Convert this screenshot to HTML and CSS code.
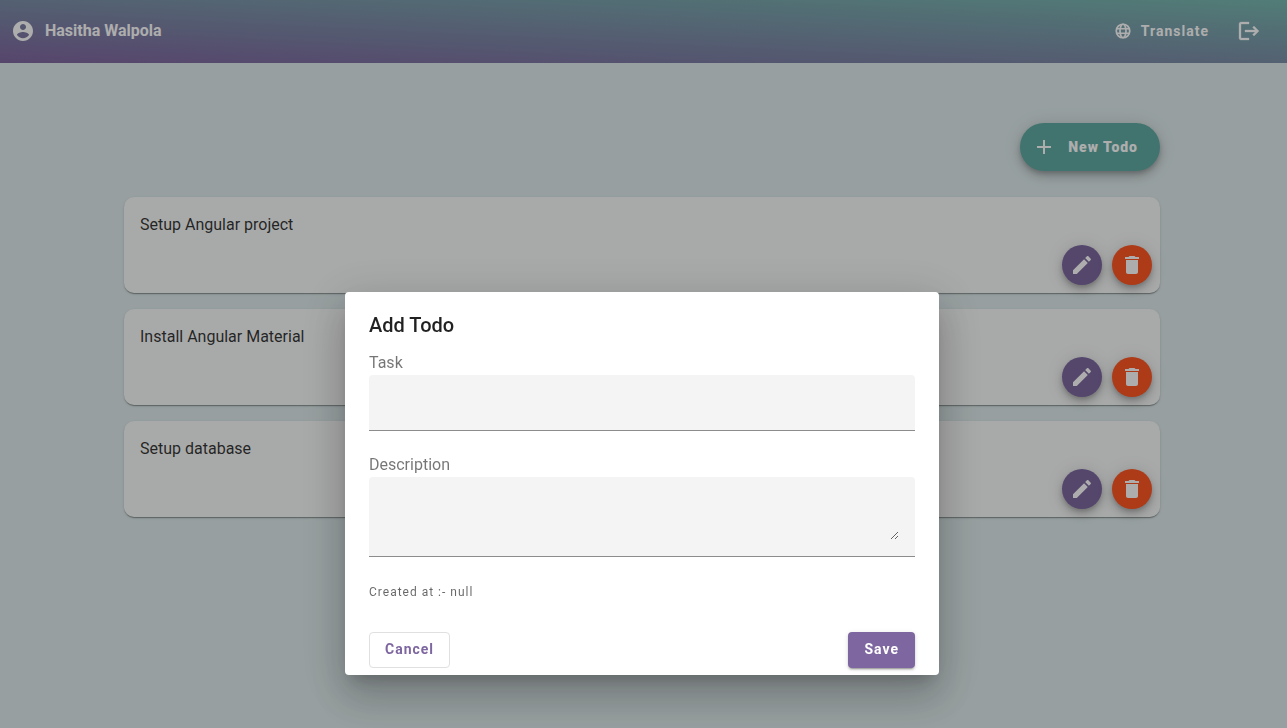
FILE: index.html
```html
<!DOCTYPE html>
<html lang="en">
<head>
<meta charset="utf-8">
<meta name="viewport" content="width=device-width, initial-scale=1">
<title>Todos</title>
<link rel="stylesheet" href="styles.css">
</head>
<body>
<header class="toolbar">
  <div class="user">
    <svg class="icon" viewBox="0 0 24 24" aria-hidden="true"><path d="M12 2C6.48 2 2 6.48 2 12s4.48 10 10 10 10-4.480 10-10S17.520 2 12 2zm0 3c1.660 0 3 1.340 3 3s-1.340 3-3 3-3-1.340-3-3 1.340-3 3-3zm0 14.200c-2.500 0-4.710-1.280-6-3.220.030-1.990 4-3.080 6-3.080 1.990 0 5.970 1.090 6 3.080-1.290 1.940-3.500 3.220-6 3.220z"/></svg>
    <span class="user-name">Hasitha Walpola</span>
  </div>
  <div class="toolbar-actions">
    <button class="translate" type="button">
      <svg class="icon-small" viewBox="0 0 24 24" aria-hidden="true"><g fill="none" stroke="currentColor" stroke-width="2.300"><circle cx="12" cy="12" r="9"/><ellipse cx="12" cy="12" rx="4" ry="9"/><path d="M3.500 9h17M3.500 15h17"/></g></svg>
      Translate
    </button>
    <button class="icon-button" type="button" aria-label="Log out">
      <svg class="icon" viewBox="0 0 24 24" aria-hidden="true"><path d="M17 7l-1.410 1.410L18.170 11H8v2h10.170l-2.580 2.580L17 17l5-5zM4 5h8V3H4c-1.100 0-2 .9-2 2v14c0 1.100.9 2 2 2h8v-2H4V5z" stroke="currentColor" stroke-width=".3"/></svg>
    </button>
  </div>
</header>
<main class="content">
  <button class="new-todo" type="button">
    <svg class="icon" viewBox="0 0 24 24" aria-hidden="true"><path d="M19 13h-6v6h-2v-6H5v-2h6V5h2v6h6v2z"/></svg>
    New Todo
  </button>
  <ul class="todos">
    <li class="card">
      <span class="card-title">Setup Angular project</span>
      <div class="card-actions">
        <button class="fab edit" type="button" aria-label="Edit"><svg class="icon" viewBox="0 0 24 24" aria-hidden="true"><path d="M3 17.250V21h3.750L17.810 9.940l-3.750-3.750L3 17.250zM20.710 7.040c.39-.39.39-1.020 0-1.410l-2.340-2.340c-.39-.39-1.020-.39-1.410 0l-1.830 1.830 3.750 3.750 1.830-1.830z"/></svg></button>
        <button class="fab delete" type="button" aria-label="Delete"><svg class="icon" viewBox="0 0 24 24" aria-hidden="true"><path d="M6 19c0 1.100.9 2 2 2h8c1.100 0 2-.9 2-2V7H6v12zM19 4h-3.500l-1-1h-5l-1 1H5v2h14V4z"/></svg></button>
      </div>
    </li>
    <li class="card">
      <span class="card-title">Install Angular Material</span>
      <div class="card-actions">
        <button class="fab edit" type="button" aria-label="Edit"><svg class="icon" viewBox="0 0 24 24" aria-hidden="true"><path d="M3 17.250V21h3.750L17.810 9.940l-3.750-3.750L3 17.250zM20.710 7.040c.39-.39.39-1.020 0-1.410l-2.340-2.340c-.39-.39-1.020-.39-1.410 0l-1.830 1.830 3.750 3.750 1.830-1.830z"/></svg></button>
        <button class="fab delete" type="button" aria-label="Delete"><svg class="icon" viewBox="0 0 24 24" aria-hidden="true"><path d="M6 19c0 1.100.9 2 2 2h8c1.100 0 2-.9 2-2V7H6v12zM19 4h-3.500l-1-1h-5l-1 1H5v2h14V4z"/></svg></button>
      </div>
    </li>
    <li class="card">
      <span class="card-title">Setup database</span>
      <div class="card-actions">
        <button class="fab edit" type="button" aria-label="Edit"><svg class="icon" viewBox="0 0 24 24" aria-hidden="true"><path d="M3 17.250V21h3.750L17.810 9.940l-3.750-3.750L3 17.250zM20.710 7.040c.39-.39.39-1.020 0-1.410l-2.340-2.340c-.39-.39-1.020-.39-1.410 0l-1.830 1.830 3.750 3.750 1.830-1.830z"/></svg></button>
        <button class="fab delete" type="button" aria-label="Delete"><svg class="icon" viewBox="0 0 24 24" aria-hidden="true"><path d="M6 19c0 1.100.9 2 2 2h8c1.100 0 2-.9 2-2V7H6v12zM19 4h-3.500l-1-1h-5l-1 1H5v2h14V4z"/></svg></button>
      </div>
    </li>
  </ul>
</main>
<div class="overlay">
  <form class="dialog" role="dialog" aria-modal="true" aria-labelledby="dialog-title">
    <h1 class="dialog-title" id="dialog-title">Add Todo</h1>
    <label class="label" for="task">Task</label>
    <div class="field"><input class="control" id="task" type="text"></div>
    <label class="label" for="description">Description</label>
    <div class="field"><textarea class="control area" id="description"></textarea></div>
    <p class="created">Created at :- null</p>
    <div class="dialog-actions">
      <button class="button cancel" type="button">Cancel</button>
      <button class="button save" type="submit">Save</button>
    </div>
  </form>
</div>
</body>
</html>
```
FILE: styles.css
```css
:root {
  --purple: #7e67a0;
  --teal: #60aba4;
  --orange: #ff5724;
  --text: rgba(0, 0, 0, 0.87);
}

* {
  box-sizing: border-box;
}

body {
  margin: 0;
  min-height: 100vh;
  background: #dfebec;
  color: var(--text);
  font-family: Roboto, "Liberation Sans", sans-serif;
  font-size: 16px;
  line-height: 24px;
}

button {
  border: 0;
  padding: 0;
  background: none;
  color: inherit;
  font: inherit;
  cursor: pointer;
}

.icon {
  display: block;
  width: 24px;
  height: 24px;
  fill: currentColor;
}

.icon-small {
  display: block;
  width: 18px;
  height: 18px;
}

.toolbar {
  display: flex;
  align-items: center;
  justify-content: space-between;
  height: 63px;
  padding: 0 26px 2px 11px;
  background: linear-gradient(to top right, #8066a0, #78b8b0);
  color: #fff;
}

.user {
  display: flex;
  align-items: center;
  gap: 10px;
}

.user-name {
  font-weight: 700;
}

.toolbar-actions {
  display: flex;
  align-items: center;
  gap: 28px;
}

.translate {
  display: flex;
  align-items: center;
  gap: 9px;
  font-size: 14px;
  font-weight: 700;
  letter-spacing: 1px;
}

.content {
  display: flex;
  flex-direction: column;
  align-items: flex-end;
  gap: 26px;
  padding: 60px 127px 60px 124px;
}

.new-todo {
  display: flex;
  align-items: center;
  gap: 12px;
  height: 48px;
  padding: 0 22px 0 12px;
  border-radius: 24px;
  background: var(--teal);
  box-shadow: 0 3px 5px -1px rgba(0, 0, 0, 0.2), 0 6px 10px rgba(0, 0, 0, 0.14), 0 1px 18px rgba(0, 0, 0, 0.12);
  color: #fff;
  font-size: 14px;
  font-weight: 900;
  letter-spacing: 1px;
}

.todos {
  display: flex;
  flex-direction: column;
  align-self: stretch;
  gap: 16px;
  margin: 0;
  padding: 0;
  list-style: none;
}

.card {
  display: flex;
  justify-content: space-between;
  min-height: 96px;
  padding: 8px 8px 8px 16px;
  border-radius: 10px;
  background: #f8faf9;
  box-shadow: 0 2px 1px -1px rgba(0, 0, 0, 0.2), 0 1px 1px rgba(0, 0, 0, 0.14), 0 1px 3px rgba(0, 0, 0, 0.12);
}

.card-title {
  padding-top: 8px;
  color: rgba(0, 0, 0, 0.8);
}

.card-actions {
  display: flex;
  align-items: flex-end;
  gap: 10px;
}

.fab {
  display: grid;
  place-items: center;
  width: 40px;
  height: 40px;
  border-radius: 50%;
  box-shadow: 0 3px 5px -1px rgba(0, 0, 0, 0.2), 0 6px 10px rgba(0, 0, 0, 0.14), 0 1px 18px rgba(0, 0, 0, 0.12);
  color: #fff;
}

.edit {
  background: var(--purple);
}

.delete {
  background: var(--orange);
}

.overlay {
  position: fixed;
  inset: 0;
  display: flex;
  align-items: flex-start;
  justify-content: center;
  padding: 292px 3px 0 0;
  background: rgba(0, 0, 0, 0.32);
}

.dialog {
  display: flex;
  flex-direction: column;
  width: 594px;
  max-width: 80vw;
  padding: 20px 24px 7px;
  border-radius: 4px;
  background: #fff;
  box-shadow: 0 11px 15px -7px rgba(0, 0, 0, 0.2), 0 24px 38px 3px rgba(0, 0, 0, 0.14), 0 9px 46px 8px rgba(0, 0, 0, 0.12);
}

.dialog-title {
  margin: 0 0 13px;
  font-size: 20px;
  font-weight: 500;
  line-height: 26px;
}

.label {
  color: rgba(0, 0, 0, 0.54);
}

.field {
  margin-bottom: 22px;
  padding: 16px;
  border-bottom: 1px solid #8c8c8c;
  border-radius: 4px 4px 0 0;
  background: #f4f4f4;
}

.control {
  display: block;
  width: 100%;
  height: 23px;
  padding: 0;
  border: 0;
  outline: 0;
  background: none;
  color: var(--text);
  font: inherit;
}

.area {
  height: 47px;
  resize: vertical;
}

.created {
  margin: 1px 0 28px;
  color: rgba(0, 0, 0, 0.6);
  font-size: 12px;
  letter-spacing: 1px;
}

.dialog-actions {
  display: flex;
  justify-content: space-between;
}

.button {
  height: 36px;
  padding: 0 16px 2px;
  border-radius: 4px;
  font-size: 14px;
  font-weight: 700;
  letter-spacing: 1px;
}

.cancel {
  padding: 0 15px 2px;
  border: 1px solid #e0e0e0;
  color: var(--purple);
}

.save {
  background: var(--purple);
  box-shadow: 0 3px 1px -2px rgba(0, 0, 0, 0.2), 0 2px 2px rgba(0, 0, 0, 0.14), 0 1px 5px rgba(0, 0, 0, 0.12);
  color: #fff;
}
```
